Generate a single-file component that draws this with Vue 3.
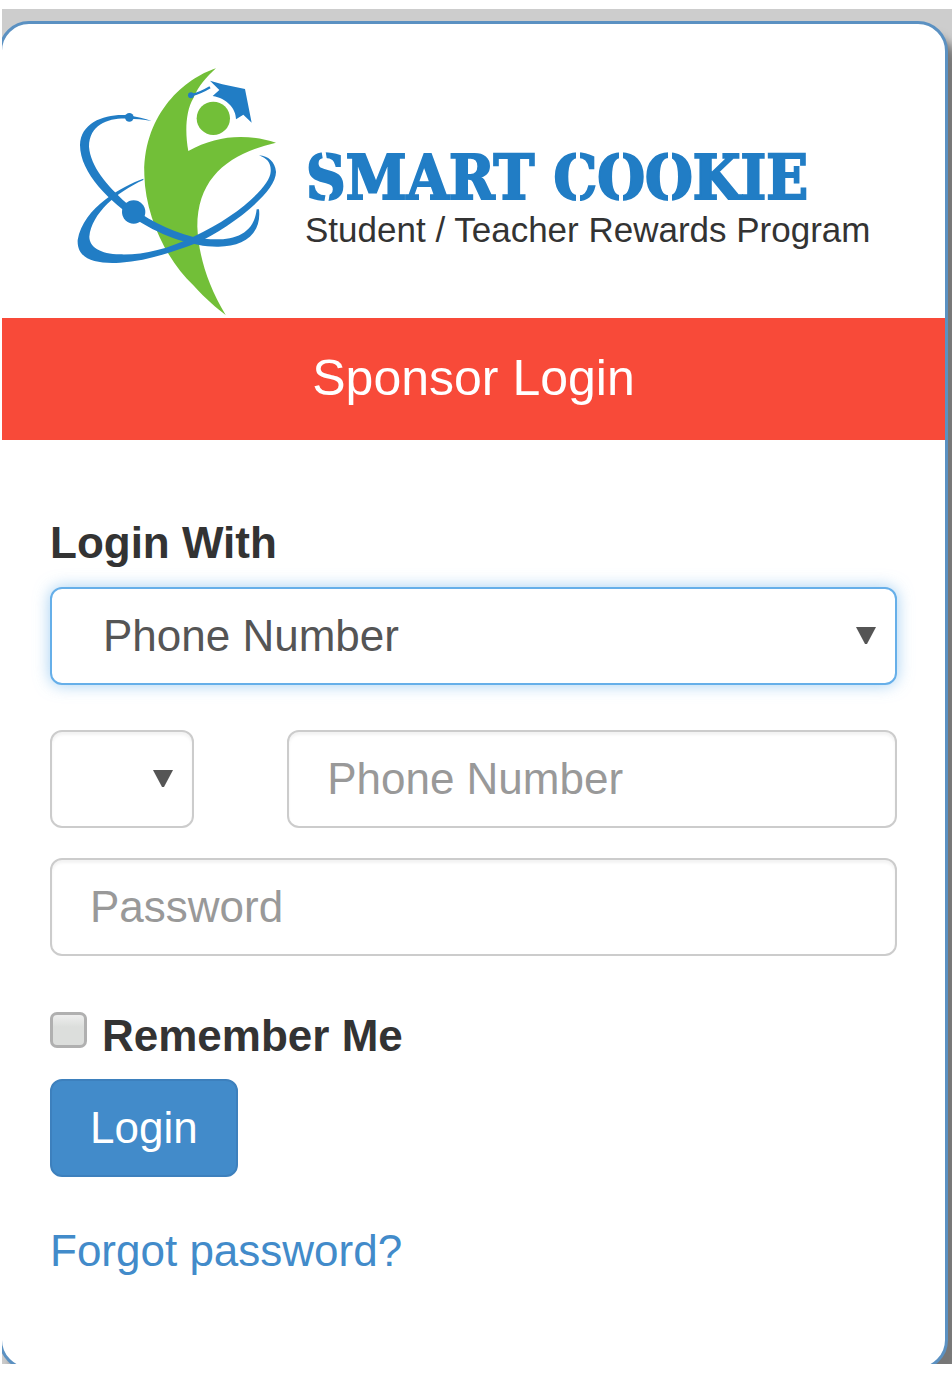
<script setup>
import { ref } from 'vue'

const method = ref('phone')
const code = ref('')
const phone = ref('')
const password = ref('')
const remember = ref(false)
</script>

<template>
  <div class="backdrop">
    <main class="card">
      <svg class="logo" viewBox="2 24 943 294" role="img" aria-label="Smart Cookie, Student / Teacher Rewards Program">
        <g transform="translate(60 50) scale(0.33333)">
          <path class="green" d="M468 55C375 85 250 190 253 375C256 500 320 630 400 706C440 750 470 775 497 795C440 700 415 610 412 530C412 380 510 310 648 278C560 250 470 255 385 303C375 250 376 185 400 145C415 108 440 80 468 55Z" />
          <circle class="green" cx="460" cy="205" r="50" />
          <path class="blue" d="M275 213C250 208 225 206 205 206C150 203 88 220 87 290C92 350 140 405 200 460C250 502 325 543 400 561C480 576 580 575 590 478L597 478C606 556 545 592 470 590C400 590 310 560 235 513C150 455 60 370 60 285C62 215 140 190 205 196C230 201 255 205 275 213Z" />
          <path class="blue" d="M250 386C190 408 70 470 53 570C50 630 110 642 180 638C260 634 340 605 410 579C500 539 650 430 648 365C645 335 625 318 597 316C622 325 634 340 632 365C630 410 530 500 400 560C320 598 250 615 180 613C120 612 88 590 88 560C95 490 170 426 250 390Z" />
          <circle class="blue" cx="208" cy="202" r="13" />
          <circle class="blue" cx="221" cy="486" r="35" />
          <path class="blue" d="M450 92L487 103L555 117L575 218L550 194L528 208C528 175 500 145 458 138L478 120Z" />
          <path class="tassel" d="M395 135Q420 130 450 112" />
          <circle class="blue" cx="393" cy="136" r="9" />
        </g>
        <text class="wordmark" x="306" y="199">SMART COOKIE</text>
        <path class="cuts" d="M323 148L325 160M328 192L326 204M578 148V204M621 148V204M670 148V204" />
        <text class="tagline" x="305" y="242">Student / Teacher Rewards Program</text>
      </svg>

      <h1 class="title">Sponsor Login</h1>

      <form class="form" @submit.prevent>
        <label class="label" for="method">Login With</label>
        <div class="picker">
          <select id="method" v-model="method" class="control method">
            <option value="phone">Phone Number</option>
            <option value="email">Email</option>
          </select>
          <svg class="arrow" viewBox="0 0 20 17" aria-hidden="true"><path d="M0 0H20L11 17H9Z" /></svg>
        </div>

        <div class="row">
          <div class="picker">
            <select v-model="code" class="control" aria-label="Country code">
              <option value=""></option>
            </select>
            <svg class="arrow" viewBox="0 0 20 17" aria-hidden="true"><path d="M0 0H20L11 17H9Z" /></svg>
          </div>
          <input v-model="phone" class="control" type="tel" placeholder="Phone Number" aria-label="Phone Number" />
        </div>

        <input v-model="password" class="control" type="password" placeholder="Password" aria-label="Password" />

        <label class="remember">
          <input v-model="remember" class="check" type="checkbox" />
          <span>Remember Me</span>
        </label>

        <button class="submit" type="submit">Login</button>
        <a class="forgot" href="#">Forgot password?</a>
      </form>
    </main>
  </div>
</template>

<style>
body {
  margin: 0;
  background: #fff;
}
</style>

<style scoped>
.backdrop {
  margin: 9px 0 26px 2px;
  padding-top: 12px;
  background: #cdcdcd;
  overflow: hidden;
  font-family: "Liberation Sans", Arial, sans-serif;
  font-size: 44px;
  line-height: 60px;
  color: #333;
}
.card {
  margin: 0 4px -6px -3px;
  border: 3px solid #5b91c2;
  border-radius: 30px;
  background: #fff;
  box-shadow: 12px 16px 10px #777;
  overflow: hidden;
}
.logo {
  display: block;
  width: 100%;
}
.green {
  fill: #72bf38;
}
.blue {
  fill: #217dc5;
}
.tassel {
  fill: none;
  stroke: #217dc5;
  stroke-width: 7;
}
.wordmark {
  font-family: "DejaVu Serif Condensed", "DejaVu Serif", serif;
  font-size: 61px;
  font-weight: 700;
  fill: #217dc5;
  stroke: #217dc5;
  stroke-width: 2;
}
.cuts {
  fill: none;
  stroke: #fff;
  stroke-width: 4;
}
.tagline {
  font-size: 35px;
  fill: #333;
}
.title {
  margin: 0;
  padding: 30px 0 32px;
  background: #f84a39;
  color: #fff;
  font-size: 50px;
  font-weight: 400;
  line-height: 60px;
  text-align: center;
}
.form {
  display: flex;
  flex-direction: column;
  align-items: flex-start;
  padding: 73px 48px 86px;
}
.label {
  margin-bottom: 14px;
  font-weight: 700;
}
.picker {
  position: relative;
  width: 100%;
}
.control {
  display: block;
  box-sizing: border-box;
  width: 100%;
  height: 98px;
  margin: 0;
  padding: 0 38px;
  border: 2px solid #ccc;
  border-radius: 12px;
  background: #fff;
  box-shadow: inset 0 3px 3px #0000000d;
  color: #555;
  font: inherit;
  appearance: none;
  outline: none;
}
.control::placeholder {
  color: #999;
  opacity: 1;
}
.method {
  padding-left: 51px;
  border-color: #66afe9;
  box-shadow: 0 0 16px #66afe999;
}
.arrow {
  position: absolute;
  top: 40px;
  right: 21px;
  width: 20px;
  height: 17px;
  fill: #555;
  pointer-events: none;
}
.row {
  display: grid;
  grid-template-columns: 17% 1fr;
  column-gap: 11%;
  width: 100%;
  margin: 45px 0 30px;
}
.remember {
  display: flex;
  align-items: flex-start;
  gap: 15px;
  margin: 50px 0 13px;
  font-weight: 700;
}
.check {
  box-sizing: border-box;
  width: 37px;
  height: 36px;
  margin: 6px 0 0;
  border: 3px solid #b0b0b0;
  border-radius: 7px;
  background: linear-gradient(#eee, #dcdedc 40%);
  appearance: none;
}
.check:checked {
  background: #428bca;
}
.submit {
  height: 98px;
  padding: 0 38px;
  border: 2px solid #3d80bd;
  border-radius: 12px;
  background: #428bca;
  color: #fff;
  font: inherit;
}
.forgot {
  margin-top: 44px;
  color: #428bca;
  text-decoration: none;
}
</style>
